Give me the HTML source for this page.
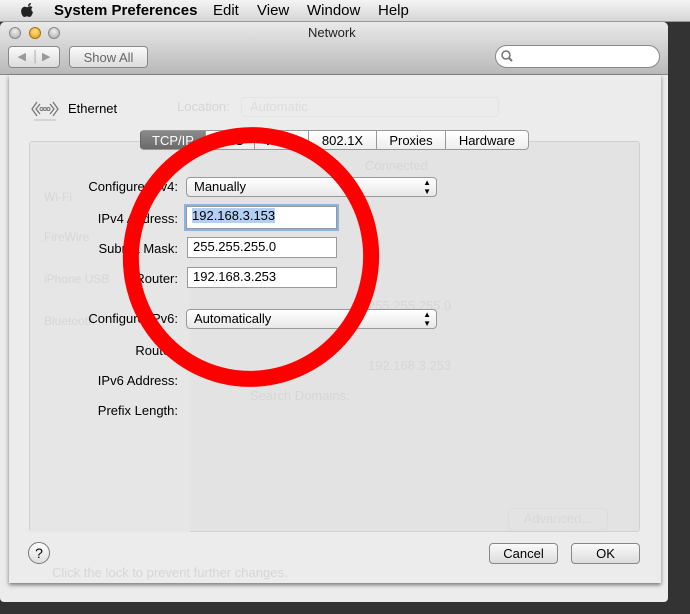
<!DOCTYPE html>
<html><head><meta charset="utf-8"><style>
*{margin:0;padding:0;box-sizing:border-box}
body{width:690px;height:614px;overflow:hidden;background:#333;font-family:"Liberation Sans",sans-serif;position:relative;font-size:13px;color:#000}
.a{position:absolute}
.menu{left:0;top:0;width:690px;height:22px;background:linear-gradient(#f4f4f4,#d6d6d6);border-bottom:1px solid #999;font-size:15px}
.menu span{position:absolute;top:2px}
.win{left:0;top:22px;width:668px;height:580px;background:#ececec;border-radius:5px 5px 4px 4px}
.tb{left:0;top:22px;width:668px;height:53px;background:linear-gradient(#e9e9e9,#b9b9b9);border-bottom:1px solid #888;border-radius:5px 5px 0 0}
.light{width:12px;height:12px;border-radius:50%;top:27px;background:radial-gradient(circle at 50% 35%,#eee,#aaa);border:1px solid #888}
.btn{background:linear-gradient(#fafafa,#dcdcdc);border:1px solid #888;border-radius:4px;text-align:center}
.sheet{left:9px;top:75px;width:652px;height:508px;background:#ececec;box-shadow:0 2px 4px rgba(0,0,0,.5)}
.panel{left:29px;top:141px;width:611px;height:391px;background:#e3e3e3;border:1px solid #d0d0d0;border-radius:3px}
.lbl{text-align:right;width:160px;left:18px;font-size:13px}
.fld{background:#fff;border:1px solid #999;height:21px;padding:1px 5px;font-size:13px}
.pop{background:linear-gradient(#fff,#e8e8e8);border:1px solid #999;border-radius:4px;height:20px;padding:1px 7px;font-size:13px}
.tab{top:130px;height:20px;border:1px solid #999;border-left:none;background:linear-gradient(#fff,#eee);font-size:13px;text-align:center;padding-top:2px}
.faint{color:#d6d6d6}
</style></head><body>
<div class="a menu">
<svg class="a" style="left:20px;top:2px" width="16" height="18" viewBox="0 0 16 18"><path d="M8 5C9 4 11 4 12.5 5.2 11 6.3 11 8.8 13 10 12.3 12.5 11 15 9.5 15 8.5 15 8.300 14.4 7 14.4 5.7 14.4 5.3 15 4.3 15 2.8 15 .8 11.5 1.2 8.5 1.5 5.5 4 4.3 5.5 4.8 6.5 5.1 7 5.5 8 5ZM8 4C8 2.5 9.3 1 11 1 11 2.7 9.6 4 8 4Z" fill="#222"/></svg>
<span style="left:54px;font-weight:bold">System Preferences</span>
<span style="left:213px">Edit</span><span style="left:257px">View</span><span style="left:307px">Window</span><span style="left:378px">Help</span>
</div>
<div class="a win"></div>
<div class="a tb"></div>
<div class="a light" style="left:9px"></div>
<div class="a light" style="left:29px;background:radial-gradient(circle at 50% 35%,#fde08a,#e09a10);border-color:#a8700c"></div>
<div class="a light" style="left:48px"></div>
<div class="a" style="left:308px;top:25px;font-size:13px;color:#222">Network</div>
<div class="a btn" style="left:8px;top:46px;width:52px;height:22px;color:#999;font-size:11px;padding-top:3px">◀ &nbsp;│ ▶</div>
<div class="a btn" style="left:69px;top:46px;width:79px;height:22px;color:#666;padding-top:3px">Show All</div>
<div class="a" style="left:495px;top:45px;width:165px;height:23px;background:#fff;border:1px solid #888;border-radius:12px"></div>
<svg class="a" style="left:500px;top:49px" width="14" height="14"><circle cx="6" cy="6" r="4" fill="none" stroke="#777" stroke-width="1.5"/><path d="M9 9L12 12" stroke="#777" stroke-width="2"/></svg>
<div class="a sheet"></div>
<svg class="a" style="left:30px;top:99px" width="30" height="22"><path d="M7 3L2 10 7 17M10 5L6 10 10 15M23 3L28 10 23 17M20 5L24 10 20 15" fill="none" stroke="#777" stroke-width="1.3"/><circle cx="11.5" cy="10" r="1.5" fill="none" stroke="#777"/><circle cx="15" cy="10" r="1.5" fill="none" stroke="#777"/><circle cx="18.5" cy="10" r="1.5" fill="none" stroke="#777"/><path d="M4 21H26" stroke="#bbb"/></svg>
<div class="a" style="left:68px;top:101px">Ethernet</div>
<div class="a faint" style="left:177px;top:99px">Location:</div>
<div class="a" style="left:241px;top:97px;width:258px;height:20px;border:1px solid #e4e4e4;border-radius:4px;color:#dcdcdc;padding:1px 8px">Automatic</div>
<div class="a panel"></div>
<div class="a" style="left:30px;top:142px;width:160px;height:390px;background:#e6e6e6"></div>
<div class="a faint" style="left:44px;top:190px;font-size:12px">Wi-Fi</div>
<div class="a faint" style="left:44px;top:230px;font-size:12px">FireWire</div>
<div class="a faint" style="left:44px;top:272px;font-size:12px">iPhone USB</div>
<div class="a faint" style="left:44px;top:314px;font-size:12px">Bluetooth</div>
<div class="a faint" style="left:365px;top:158px">Connected</div>
<div class="a faint" style="left:368px;top:298px">255.255.255.0</div>
<div class="a faint" style="left:368px;top:358px">192.168.3.253</div>
<div class="a faint" style="left:250px;top:388px">Search Domains:</div>
<div class="a" style="left:508px;top:508px;width:100px;height:22px;border:1px solid #ddd;border-radius:4px;color:#d8d8d8;text-align:center;padding-top:2px">Advanced...</div>
<div class="a tab" style="left:140px;width:66px;border-left:1px solid #666;background:linear-gradient(#8a8a8a,#6a6a6a);color:#fff;border-radius:4px 0 0 4px">TCP/IP</div>
<div class="a tab" style="left:206px;width:49px">DNS</div>
<div class="a tab" style="left:255px;width:54px">WINS</div>
<div class="a tab" style="left:309px;width:68px">802.1X</div>
<div class="a tab" style="left:377px;width:69px">Proxies</div>
<div class="a tab" style="left:446px;width:83px;border-radius:0 4px 4px 0">Hardware</div>
<div class="a lbl" style="top:179px">Configure IPv4:</div>
<div class="a pop" style="left:186px;top:177px;width:251px">Manually<span style="position:absolute;right:5px;top:0;font-size:8px;line-height:9px">▲<br>▼</span></div>
<div class="a lbl" style="top:211px">IPv4 Address:</div>
<div class="a fld" style="left:186px;top:206px;width:151px;height:23px;box-shadow:0 0 0 2px #8db2e3"><span style="background:#b3d0f4">192.168.3.153</span></div>
<div class="a lbl" style="top:241px">Subnet Mask:</div>
<div class="a fld" style="left:187px;top:237px;width:150px">255.255.255.0</div>
<div class="a lbl" style="top:271px">Router:</div>
<div class="a fld" style="left:187px;top:267px;width:150px">192.168.3.253</div>
<div class="a lbl" style="top:311px">Configure IPv6:</div>
<div class="a pop" style="left:186px;top:309px;width:251px">Automatically<span style="position:absolute;right:5px;top:0;font-size:8px;line-height:9px">▲<br>▼</span></div>
<div class="a lbl" style="top:343px">Router:</div>
<div class="a lbl" style="top:373px">IPv6 Address:</div>
<div class="a lbl" style="top:403px">Prefix Length:</div>
<svg class="a" style="left:0;top:0" width="690" height="614"><ellipse cx="251" cy="257" rx="120" ry="122" fill="none" stroke="#f00" stroke-width="16" transform="rotate(15 251 257)"/></svg>
<div class="a faint" style="left:52px;top:565px">Click the lock to prevent further changes.</div>
<div class="a" style="left:28px;top:542px;width:22px;height:22px;border-radius:50%;background:linear-gradient(#fff,#ddd);border:1px solid #777;text-align:center;font-size:14px;padding-top:2px">?</div>
<div class="a btn" style="left:489px;top:543px;width:69px;height:21px;padding-top:2px">Cancel</div>
<div class="a btn" style="left:571px;top:543px;width:69px;height:21px;padding-top:2px">OK</div>
</body></html>
